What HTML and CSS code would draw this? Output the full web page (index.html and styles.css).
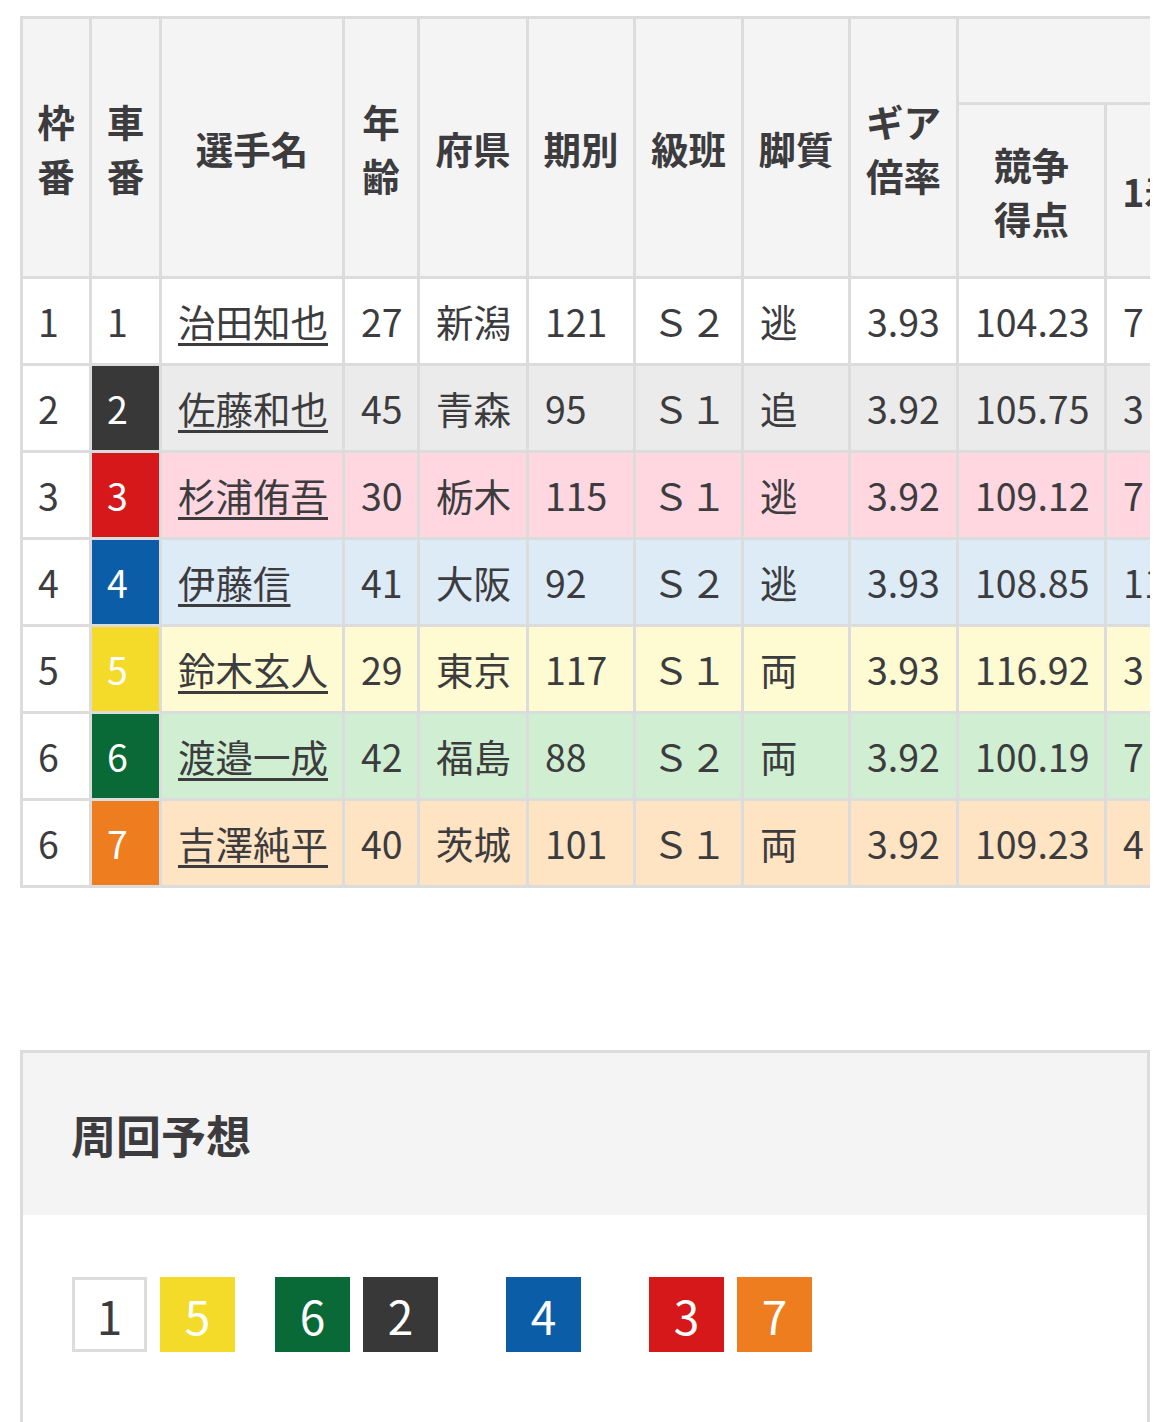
FILE: index.html
```html
<!DOCTYPE html>
<html lang="ja">
<head>
<meta charset="utf-8">
<title>出走表</title>
<link rel="stylesheet" href="styles.css">
</head>
<body>
<div class="table-wrap">
  <table class="entry">
    <colgroup>
      <col class="c-waku">
      <col class="c-sha">
      <col class="c-name">
      <col class="c-age">
      <col class="c-pref">
      <col class="c-term">
      <col class="c-class">
      <col class="c-leg">
      <col class="c-gear">
      <col class="c-score">
      <col class="c-rec">
      <col class="c-rec">
      <col class="c-rec">
      <col class="c-rec">
    </colgroup>
    <thead>
      <tr class="hrow1">
        <th rowspan="2">枠<br>番</th>
        <th rowspan="2">車<br>番</th>
        <th rowspan="2">選手名</th>
        <th rowspan="2">年<br>齢</th>
        <th rowspan="2">府県</th>
        <th rowspan="2">期別</th>
        <th rowspan="2">級班</th>
        <th rowspan="2">脚質</th>
        <th rowspan="2">ギア<br>倍率</th>
        <th colspan="5" class="group"><span class="group-label">成績</span></th>
      </tr>
      <tr class="hrow2">
        <th>競争<br>得点</th>
        <th>1着</th>
        <th>2着</th>
        <th>3着</th>
        <th>着外</th>
      </tr>
    </thead>
    <tbody>
      <tr class="r1">
        <td class="waku">1</td><td class="sha s1">1</td><td><a href="#">治田知也</a></td><td>27</td><td>新潟</td><td>121</td><td class="cls">Ｓ２</td><td>逃</td><td>3.93</td><td>104.23</td><td>7</td><td>5</td><td>3</td><td>10</td>
      </tr>
      <tr class="r2">
        <td class="waku">2</td><td class="sha s2">2</td><td><a href="#">佐藤和也</a></td><td>45</td><td>青森</td><td>95</td><td class="cls">Ｓ１</td><td>追</td><td>3.92</td><td>105.75</td><td>3</td><td>6</td><td>4</td><td>12</td>
      </tr>
      <tr class="r3">
        <td class="waku">3</td><td class="sha s3">3</td><td><a href="#">杉浦侑吾</a></td><td>30</td><td>栃木</td><td>115</td><td class="cls">Ｓ１</td><td>逃</td><td>3.92</td><td>109.12</td><td>7</td><td>4</td><td>5</td><td>9</td>
      </tr>
      <tr class="r4">
        <td class="waku">4</td><td class="sha s4">4</td><td><a href="#">伊藤信</a></td><td>41</td><td>大阪</td><td>92</td><td class="cls">Ｓ２</td><td>逃</td><td>3.93</td><td>108.85</td><td>11</td><td>3</td><td>2</td><td>8</td>
      </tr>
      <tr class="r5">
        <td class="waku">5</td><td class="sha s5">5</td><td><a href="#">鈴木玄人</a></td><td>29</td><td>東京</td><td>117</td><td class="cls">Ｓ１</td><td>両</td><td>3.93</td><td>116.92</td><td>3</td><td>7</td><td>4</td><td>6</td>
      </tr>
      <tr class="r6">
        <td class="waku">6</td><td class="sha s6">6</td><td><a href="#">渡邉一成</a></td><td>42</td><td>福島</td><td>88</td><td class="cls">Ｓ２</td><td>両</td><td>3.92</td><td>100.19</td><td>7</td><td>2</td><td>3</td><td>14</td>
      </tr>
      <tr class="r7">
        <td class="waku">6</td><td class="sha s7">7</td><td><a href="#">吉澤純平</a></td><td>40</td><td>茨城</td><td>101</td><td class="cls">Ｓ１</td><td>両</td><td>3.92</td><td>109.23</td><td>4</td><td>6</td><td>5</td><td>11</td>
      </tr>
    </tbody>
  </table>
</div>

<section class="lap">
  <h2 class="lap-title">周回予想</h2>
  <div class="lap-body">
    <div class="line">
      <div class="grp">
        <span class="num n1">1</span>
        <span class="num n5">5</span>
      </div>
      <div class="grp">
        <span class="num n6">6</span>
        <span class="num n2">2</span>
      </div>
      <div class="grp wide">
        <span class="num n4">4</span>
      </div>
      <div class="grp wide2">
        <span class="num n3">3</span>
        <span class="num n7">7</span>
      </div>
    </div>
  </div>
</section>
</body>
</html>
```

FILE: styles.css
```css
* { box-sizing: border-box; }

html, body {
  margin: 0;
  padding: 0;
  background: #fff;
}

body {
  font-family: "Noto Sans CJK JP", "Noto Sans", sans-serif;
  color: #3c3c3f;
  padding: 16px 20px 0;
}

.table-wrap {
  width: 1130px;
  overflow: hidden;
}

.entry {
  table-layout: fixed;
  border-collapse: separate;
  border-spacing: 0;
  width: 1458px;
  border-top: 3px solid #dcdcdc;
  border-left: 3px solid #dcdcdc;
  font-size: 37.5px;
}

.c-waku { width: 69px; }
.c-sha { width: 70px; }
.c-name { width: 183px; }
.c-age { width: 75px; }
.c-pref { width: 109px; }
.c-term { width: 107px; }
.c-class { width: 108px; }
.c-leg { width: 107px; }
.c-gear { width: 108px; }
.c-score { width: 148px; }
.c-rec { width: 93px; }

.entry th,
.entry td {
  border-right: 3px solid #dcdcdc;
  border-bottom: 3px solid #dcdcdc;
  padding: 0 16px;
  vertical-align: middle;
  white-space: nowrap;
}

.entry th {
  background: #f4f4f4;
  font-weight: 700;
  text-align: center;
  line-height: 54px;
  padding: 0 2px;
}

.hrow1 th.group { height: 86px; }
.hrow2 th { height: 174px; }

.group-label {
  display: inline-block;
  padding-left: 360px;
}

.entry td {
  height: 87px;
  line-height: 54px;
  font-weight: 400;
}

.entry td.waku,
.entry td.sha { padding-left: 15px; }

.entry td a {
  color: #3c3c3f;
  text-decoration: underline;
  text-underline-offset: 6px;
  text-decoration-thickness: 3px;
}

.entry td.waku { background: #fff; }
.entry td.sha { color: #fff; }

.r1 td { background: #fff; }
.r2 td { background: #ebebeb; }
.r3 td { background: #ffd7e0; }
.r4 td { background: #ddebf7; }
.r5 td { background: #fefad2; }
.r6 td { background: #d0efd2; }
.r7 td { background: #ffe4c4; }

.entry td.s1 { background: #fff; color: #3c3c3f; }
.entry td.s2 { background: #383838; }
.entry td.s3 { background: #d7181b; }
.entry td.s4 { background: #0c5da8; }
.entry td.s5 { background: #f4db29; }
.entry td.s6 { background: #096a38; }
.entry td.s7 { background: #ee7d1f; }

/* lap prediction */
.lap {
  margin-top: 162px;
  width: 1130px;
  border: 3px solid #dcdcdc;
  border-bottom: none;
  height: 400px;
}

.lap-title {
  margin: 0;
  background: #f4f4f4;
  height: 162px;
  display: flex;
  align-items: center;
  padding: 0 48px;
  font-size: 45px;
  font-weight: 700;
  color: #3c3c3f;
}

.lap-body {
  padding: 62px 49px 0;
}

.line {
  display: flex;
  align-items: center;
  gap: 40px;
}

.grp {
  display: flex;
  gap: 13px;
}

.grp.wide { margin-left: 28px; }
.grp.wide2 { margin-left: 28px; }

.num {
  width: 75px;
  height: 75px;
  display: flex;
  align-items: center;
  justify-content: center;
  font-size: 46px;
  color: #fff;
  line-height: 1;
}

.n1 { background: #fff; border: 3px solid #dcdcdc; color: #3c3c3f; }
.n2 { background: #383838; }
.n3 { background: #d7181b; }
.n4 { background: #0c5da8; }
.n5 { background: #f4db29; }
.n6 { background: #096a38; }
.n7 { background: #ee7d1f; }
```
